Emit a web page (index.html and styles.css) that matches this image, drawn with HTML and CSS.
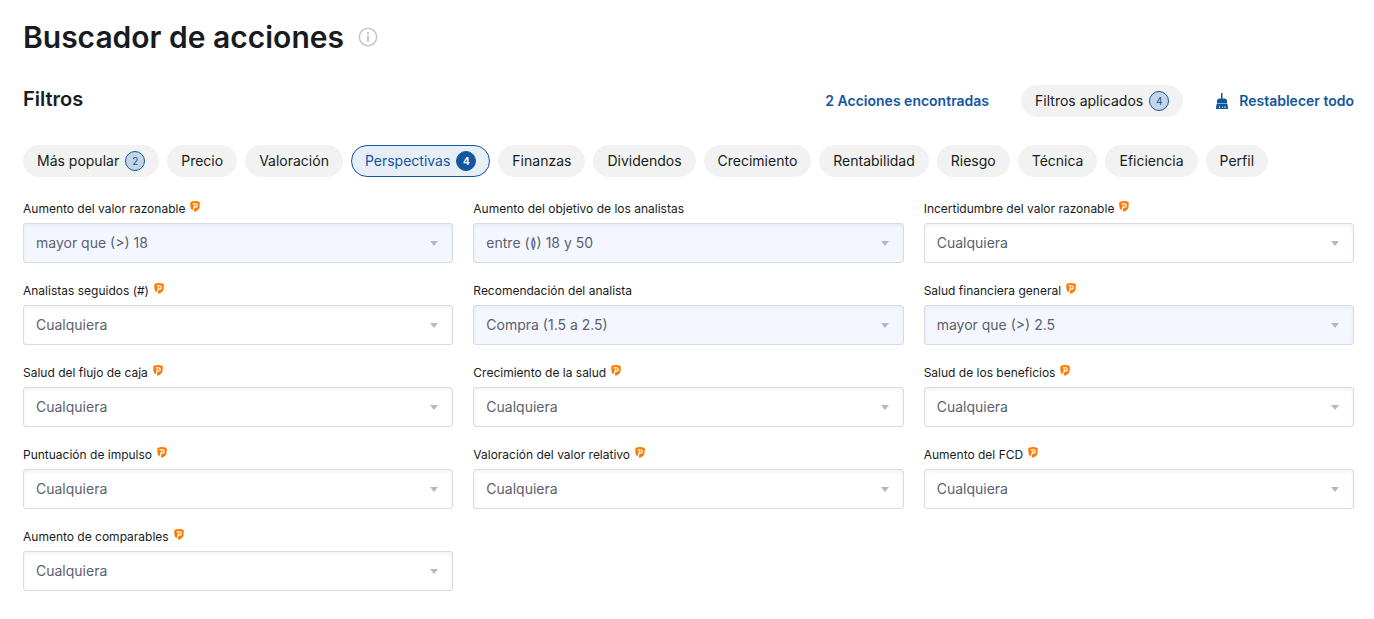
FILE: index.html
```html
<!DOCTYPE html>
<html lang="es">
<head>
<meta charset="utf-8">
<meta name="viewport" content="width=device-width, initial-scale=1">
<title>Buscador de acciones</title>
<link rel="stylesheet" href="styles.css">
</head>
<body>
<svg width="0" height="0" class="sprite" aria-hidden="true">
  <symbol id="pro" viewBox="0 0 10 11">
    <path fill="#ff7901" d="M1 .8Q5-.7 9 .8q.9.3.8 1.300L9.500 6.200Q9.200 8.500 7.200 9.600L5 10.800 4 10.200 3.900 8.500 2.800 9.600Q.8 8.500.5 6.200L.2 2.100Q.1 1.100 1 .8Z"/>
    <path fill="none" stroke="#fff" stroke-width="1.200" d="M3.200 9.500 4 6.200H5.500Q7.300 6 7.300 4.400 7.300 2.800 5.500 2.800H2.600M4.600 4.200 4 6.300"/>
  </symbol>
</svg>
<main class="screener">
  <header class="heading">
    <h1 class="title">Buscador de acciones</h1>
    <button class="info" type="button" aria-label="Información">
      <svg width="20" height="20" viewBox="0 0 20 20" fill="none" stroke="#c5c7cf" stroke-width="1.500"><circle cx="10" cy="10" r="8.700"/><path d="M10 8.500v6.500M10 5v2" stroke-width="2"/></svg>
    </button>
  </header>

  <div class="toolbar">
    <h2 class="subtitle">Filtros</h2>
    <div class="actions">
      <a class="found" href="#resultados">2 Acciones encontradas</a>
      <button class="pill" type="button">Filtros aplicados <span class="badge">4</span></button>
      <button class="reset" type="button">
        <svg width="14" height="18" viewBox="0 0 14 18" fill="#1256a0"><path d="M6 1h1.500v5.500H9.500q2.500 0 2.500 2.500v2H2V9q0-2.500 2.500-2.500H6ZM1.800 11.600h10.400q.8 2.400.8 5.400H1q0-3 .8-5.400Z"/><path d="M4.500 16v-1.600M7.500 16v-1.200M10 16v-1.600" stroke="#fff"/></svg>
        Restablecer todo
      </button>
    </div>
  </div>

  <nav class="tabs">
    <button class="pill" type="button">Más popular <span class="badge">2</span></button>
    <button class="pill" type="button">Precio</button>
    <button class="pill" type="button">Valoración</button>
    <button class="pill pill-active" type="button">Perspectivas <span class="badge badge-solid">4</span></button>
    <button class="pill" type="button">Finanzas</button>
    <button class="pill" type="button">Dividendos</button>
    <button class="pill" type="button">Crecimiento</button>
    <button class="pill" type="button">Rentabilidad</button>
    <button class="pill" type="button">Riesgo</button>
    <button class="pill" type="button">Técnica</button>
    <button class="pill" type="button">Eficiencia</button>
    <button class="pill" type="button">Perfil</button>
  </nav>

  <form class="filters">
    <div class="field"><label class="label" for="f1">Aumento del valor razonable <svg class="pro"><use href="#pro"/></svg></label><div class="box"><select class="select select-set" id="f1"><option>mayor que (&gt;) 18</option></select></div></div>
    <div class="field"><label class="label" for="f2">Aumento del objetivo de los analistas</label><div class="box"><select class="select select-set" id="f2"><option>entre (≬) 18 y 50</option></select></div></div>
    <div class="field"><label class="label" for="f3">Incertidumbre del valor razonable <svg class="pro"><use href="#pro"/></svg></label><div class="box"><select class="select" id="f3"><option>Cualquiera</option></select></div></div>
    <div class="field"><label class="label" for="f4">Analistas seguidos (#) <svg class="pro"><use href="#pro"/></svg></label><div class="box"><select class="select" id="f4"><option>Cualquiera</option></select></div></div>
    <div class="field"><label class="label" for="f5">Recomendación del analista</label><div class="box"><select class="select select-set" id="f5"><option>Compra (1.5 a 2.5)</option></select></div></div>
    <div class="field"><label class="label" for="f6">Salud financiera general <svg class="pro"><use href="#pro"/></svg></label><div class="box"><select class="select select-set" id="f6"><option>mayor que (&gt;) 2.5</option></select></div></div>
    <div class="field"><label class="label" for="f7">Salud del flujo de caja <svg class="pro"><use href="#pro"/></svg></label><div class="box"><select class="select" id="f7"><option>Cualquiera</option></select></div></div>
    <div class="field"><label class="label" for="f8">Crecimiento de la salud <svg class="pro"><use href="#pro"/></svg></label><div class="box"><select class="select" id="f8"><option>Cualquiera</option></select></div></div>
    <div class="field"><label class="label" for="f9">Salud de los beneficios <svg class="pro"><use href="#pro"/></svg></label><div class="box"><select class="select" id="f9"><option>Cualquiera</option></select></div></div>
    <div class="field"><label class="label" for="f10">Puntuación de impulso <svg class="pro"><use href="#pro"/></svg></label><div class="box"><select class="select" id="f10"><option>Cualquiera</option></select></div></div>
    <div class="field"><label class="label" for="f11">Valoración del valor relativo <svg class="pro"><use href="#pro"/></svg></label><div class="box"><select class="select" id="f11"><option>Cualquiera</option></select></div></div>
    <div class="field"><label class="label" for="f12">Aumento del FCD <svg class="pro"><use href="#pro"/></svg></label><div class="box"><select class="select" id="f12"><option>Cualquiera</option></select></div></div>
    <div class="field"><label class="label" for="f13">Aumento de comparables <svg class="pro"><use href="#pro"/></svg></label><div class="box"><select class="select" id="f13"><option>Cualquiera</option></select></div></div>
  </form>
</main>
</body>
</html>
```

FILE: styles.css
```css
* {
  box-sizing: border-box;
}

body {
  margin: 0;
  background: #fff;
  color: #181c21;
  font-family: Inter, "Liberation Sans", sans-serif;
  font-size: 14px;
  line-height: 20px;
}

button,
select {
  margin: 0;
  font: inherit;
}

button {
  cursor: pointer;
}

.sprite {
  position: absolute;
}

.screener {
  padding: 17px 20px 28px 23px;
}

.heading {
  display: flex;
  align-items: center;
  gap: 14px;
}

.title {
  margin: 0;
  font-size: 30px;
  font-weight: 600;
  line-height: 40px;
}

.info {
  display: flex;
  padding: 0;
  border: 0;
  background: none;
}

.toolbar {
  display: flex;
  align-items: flex-start;
  justify-content: space-between;
  margin-top: 28px;
}

.subtitle {
  margin: 0;
  font-size: 20px;
  font-weight: 600;
  line-height: 28px;
}

.actions {
  display: flex;
  align-items: center;
  gap: 32px;
}

.found,
.reset {
  color: #1256a0;
  font-weight: 600;
  text-decoration: none;
}

.reset {
  display: flex;
  align-items: center;
  gap: 10px;
  padding: 0;
  border: 0;
  background: none;
}

.pill {
  display: flex;
  align-items: center;
  gap: 6px;
  height: 32px;
  padding: 0 13px;
  border: 1px solid #f2f2f2;
  border-radius: 16px;
  background: #f2f2f2;
  color: #181c21;
  white-space: nowrap;
}

.pill-active {
  border-color: #1256a0;
  background: #e7eef6;
  color: #1256a0;
}

.badge {
  width: 20px;
  height: 20px;
  border: 1px solid #1256a0;
  border-radius: 10px;
  background: #c4d5e7;
  color: #1256a0;
  font-size: 10px;
  line-height: 18px;
  text-align: center;
}

.badge-solid {
  background: #1256a0;
  color: #fff;
  font-weight: 700;
}

.tabs {
  display: flex;
  flex-wrap: wrap;
  gap: 8px;
  margin-top: 28px;
}

.filters {
  display: grid;
  grid-template-columns: repeat(3, 1fr);
  gap: 20px;
  margin-top: 24px;
}

.field {
  display: flex;
  flex-direction: column;
  gap: 6px;
}

.label {
  display: flex;
  align-items: flex-start;
  gap: 5px;
  font-size: 12px;
  line-height: 16px;
}

.pro {
  width: 10px;
  height: 11px;
}

.box {
  position: relative;
}

.box::after {
  content: "";
  position: absolute;
  top: 18px;
  right: 15px;
  border: 4px solid transparent;
  border-top: 5px solid #b5b8bf;
  border-bottom: 0;
  pointer-events: none;
}

.select {
  display: block;
  width: 100%;
  height: 40px;
  padding: 0 32px 0 12px;
  border: 1px solid #d9dbe0;
  border-radius: 3px;
  background: #fff;
  box-shadow: inset 0 2px 4px #0000000d;
  color: #5b616e;
  appearance: none;
}

.select-set {
  background: #f4f7ff;
}
```
